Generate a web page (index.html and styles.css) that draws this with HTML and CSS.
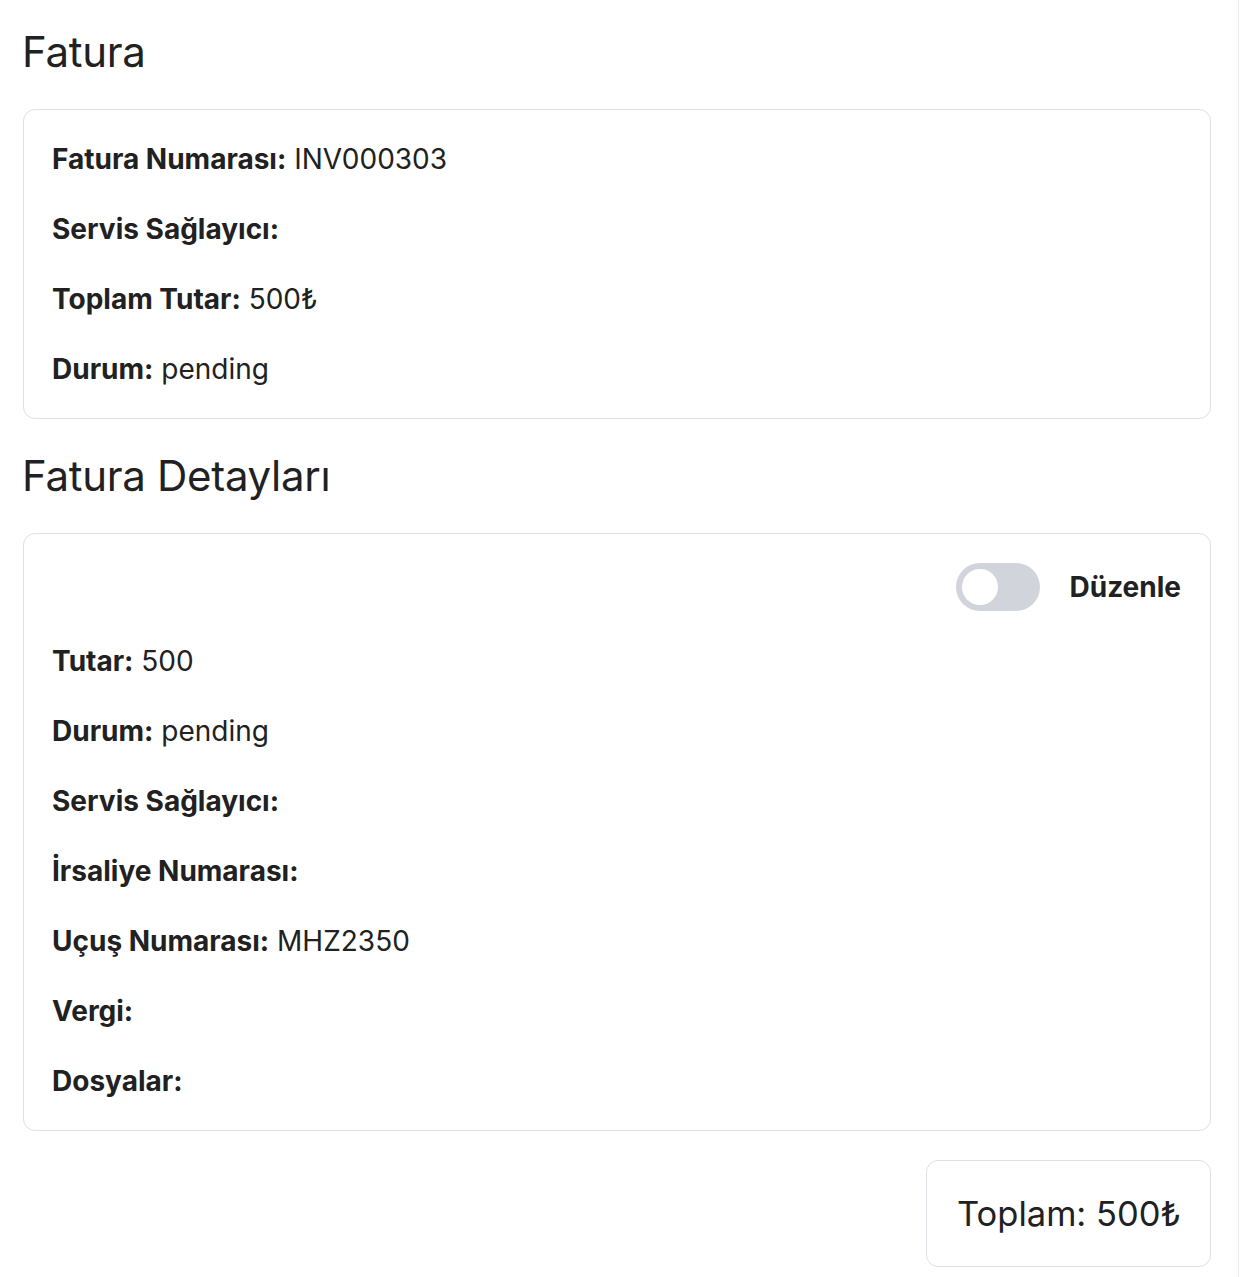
FILE: index.html
```html
<!DOCTYPE html>
<html lang="tr">
<head>
<meta charset="utf-8">
<title>Fatura</title>
<link rel="stylesheet" href="styles.css">
</head>
<body>
<div class="page">
  <h1 class="title">Fatura</h1>
  <section class="card">
    <p class="row"><strong>Fatura Numarası:</strong> INV000303</p>
    <p class="row"><strong>Servis Sağlayıcı:</strong></p>
    <p class="row"><strong>Toplam Tutar:</strong> 500₺</p>
    <p class="row"><strong>Durum:</strong> pending</p>
  </section>

  <h2 class="title">Fatura Detayları</h2>
  <section class="card">
    <div class="edit-row">
      <span class="toggle"><span class="knob"></span></span>
      <span class="edit-label">Düzenle</span>
    </div>
    <p class="row"><strong>Tutar:</strong> 500</p>
    <p class="row"><strong>Durum:</strong> pending</p>
    <p class="row"><strong>Servis Sağlayıcı:</strong></p>
    <p class="row"><strong>İrsaliye Numarası:</strong></p>
    <p class="row"><strong>Uçuş Numarası:</strong> MHZ2350</p>
    <p class="row"><strong>Vergi:</strong></p>
    <p class="row"><strong>Dosyalar:</strong></p>
  </section>

  <div class="total-wrap">
    <div class="total">Toplam: 500₺</div>
  </div>
</div>
</body>
</html>
```
FILE: styles.css
```css
html, body {
  margin: 0;
  padding: 0;
  background: #ffffff;
}
body {
  font-family: Inter, "Noto Sans", "Liberation Sans", sans-serif;
  color: #212121;
}
.page {
  box-sizing: border-box;
  width: 1239px;
  min-height: 1277px;
  border-right: 1px solid #ececf0;
  padding: 24px 27px 10px 23px;
}
.title {
  margin: 0;
  font-weight: 400;
  font-size: 42px;
  line-height: 56px;
  letter-spacing: -0.3px;
  margin-left: -1px;
}
h1.title {
  margin-bottom: 29px;
}
h2.title {
  margin-top: 29px;
  margin-bottom: 29px;
}
.card {
  border: 1px solid #dfdfe6;
  border-radius: 12px;
  padding: 29px 29px 29px 28px;
  display: flex;
  flex-direction: column;
  gap: 30px;
}
.row {
  margin: 0;
  font-size: 28px;
  line-height: 40px;
}
.row strong {
  font-weight: 700;
}
.edit-row {
  display: flex;
  justify-content: flex-end;
  align-items: center;
  gap: 29px;
}
.toggle {
  width: 84px;
  height: 48px;
  border-radius: 24px;
  background: #d1d5db;
  display: flex;
  align-items: center;
  padding: 0 6px;
  box-sizing: border-box;
}
.knob {
  width: 36px;
  height: 36px;
  border-radius: 50%;
  background: #ffffff;
}
.edit-label {
  font-size: 28px;
  font-weight: 700;
}
.total-wrap {
  display: flex;
  justify-content: flex-end;
  margin-top: 29px;
}
.total {
  border: 1px solid #dfdfe6;
  border-radius: 12px;
  padding: 30px 29px 30px 30px;
  font-size: 34.5px;
  line-height: 45px;
}
```
